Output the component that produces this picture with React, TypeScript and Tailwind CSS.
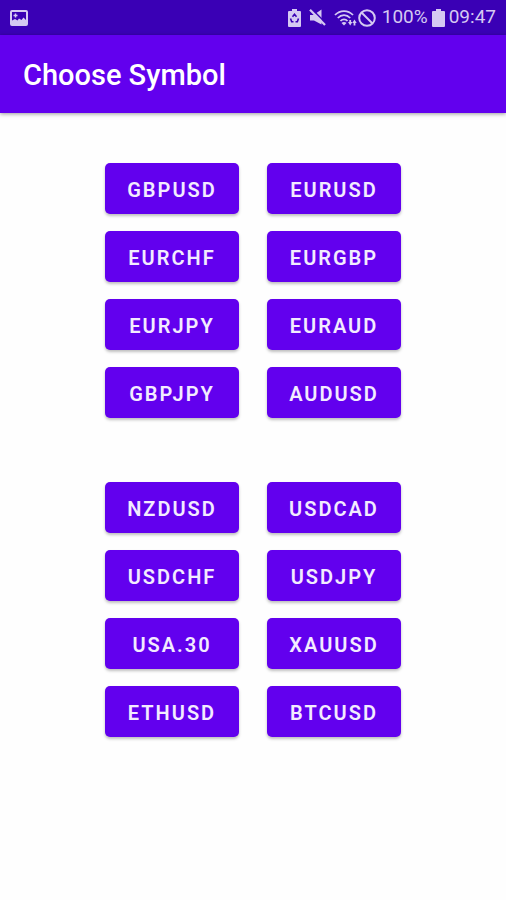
const SYMBOL_GROUPS = [
  ['GBPUSD', 'EURUSD', 'EURCHF', 'EURGBP', 'EURJPY', 'EURAUD', 'GBPJPY', 'AUDUSD'],
  ['NZDUSD', 'USDCAD', 'USDCHF', 'USDJPY', 'USA.30', 'XAUUSD', 'ETHUSD', 'BTCUSD'],
]

function PictureIcon() {
  return (
    <svg viewBox="0 0 18 16" className="h-4 w-[18px]" fill="none" aria-hidden>
      <rect x="1" y="1" width="16" height="14" rx="1" stroke="currentColor" strokeWidth="2" />
      <path d="M2 10.500l3-1.500 2.500 1.500L9 8.500l2.500 1.500 2-2.500L16 10v4H2z" fill="currentColor" />
      <path d="M5.500 3.500v4M3.500 5.500h4" stroke="currentColor" strokeWidth="1.500" />
    </svg>
  )
}

function BatterySaverIcon() {
  return (
    <svg viewBox="0 0 13 18" className="h-[18px] w-[13px]" aria-hidden>
      <path d="M4 0h5v2h3a1 1 0 0 1 1 1v14a1 1 0 0 1-1 1H1a1 1 0 0 1-1-1V3a1 1 0 0 1 1-1h3z" fill="currentColor" />
      <path d="M4.500 7.800L6.500 5.300l2 2.500M2.500 9.500l1.200 3.300h1.800M10.500 9.500l-1.200 3.300H7.500" fill="none" stroke="#3a00b5" strokeWidth="1.600" />
    </svg>
  )
}

function MutedIcon() {
  return (
    <svg viewBox="0 0 17 17" className="size-[17px]" fill="none" aria-hidden>
      <path d="M1 6h3.500L12.500 0.500v15L5 11.500H1z" fill="currentColor" />
      <path d="M3.200 0.500L17 14.300" stroke="#3a00b5" strokeWidth="1.600" />
      <path d="M1 0.800L16 16" stroke="currentColor" strokeWidth="2.200" />
    </svg>
  )
}

function WifiIcon() {
  return (
    <svg viewBox="0 0 24 18" className="h-[18px] w-6" fill="none" stroke="currentColor" strokeWidth="1.800" aria-hidden>
      <path d="M1 6c5-5.300 13-5.300 18 0M3.800 9c3.600-3.800 8.800-3.800 12.400 0M6.500 12c2-2.300 5-2.300 7 0" />
      <path d="M7.500 14c1.500-1.500 3.500-1.500 5 0L10 16.500z" fill="currentColor" stroke="none" />
      <path d="M14 13l2.200 3.500 2.200-3.500zM18.300 14l2.200-3.500 2.200 3.500z" fill="currentColor" stroke="none" />
      <path d="M16.200 11v3M20.500 13v3.500" />
    </svg>
  )
}

function BlockedIcon() {
  return (
    <svg viewBox="0 0 18 18" className="size-[18px]" fill="none" stroke="currentColor" strokeWidth="2" aria-hidden>
      <circle cx="9" cy="9" r="7.800" />
      <path d="M3.500 3.500l11 11" />
    </svg>
  )
}

function BatteryIcon() {
  return (
    <svg viewBox="0 0 13 18" className="h-[18px] w-[13px]" fill="currentColor" aria-hidden>
      <path d="M4 0h5v2h3a1 1 0 0 1 1 1v14a1 1 0 0 1-1 1H1a1 1 0 0 1-1-1V3a1 1 0 0 1 1-1h3z" />
    </svg>
  )
}

function StatusBar() {
  return (
    <div className="flex h-[35px] items-center justify-between bg-[#3a00b5] px-2.5 text-[19px] text-[#d5c9f2]">
      <PictureIcon />
      <div className="flex items-center">
        <div className="flex items-center gap-2">
          <BatterySaverIcon />
          <MutedIcon />
          <WifiIcon />
        </div>
        <BlockedIcon />
        <span className="ml-1.5">100%</span>
        <div className="ml-1 flex items-center gap-1">
          <BatteryIcon />
          <time>09:47</time>
        </div>
      </div>
    </div>
  )
}

export default function App() {
  return (
    <div className="min-h-screen bg-[#fefefe] font-['Roboto',sans-serif]">
      <StatusBar />
      <header className="flex h-[78px] items-center bg-[#6200ee] px-[23px] pt-1 shadow-[0_1px_4px_rgba(0,0,0,0.4)]">
        <h1 className="text-[29px] font-medium text-white">Choose Symbol</h1>
      </header>

      <main className="flex flex-col items-center gap-16 py-[50px]">
        {SYMBOL_GROUPS.map((group) => (
          <section key={group[0]} className="grid grid-cols-2 gap-x-7 gap-y-[17px]">
            {group.map((symbol) => (
              <button
                key={symbol}
                type="button"
                className="h-[51px] w-[134px] rounded-[5px] bg-[#6200ee] pt-0.5 text-xl font-semibold tracking-widest text-[#f3ebff] shadow-[0_2px_3px_rgba(0,0,0,0.25)]"
              >
                {symbol}
              </button>
            ))}
          </section>
        ))}
      </main>
    </div>
  )
}
